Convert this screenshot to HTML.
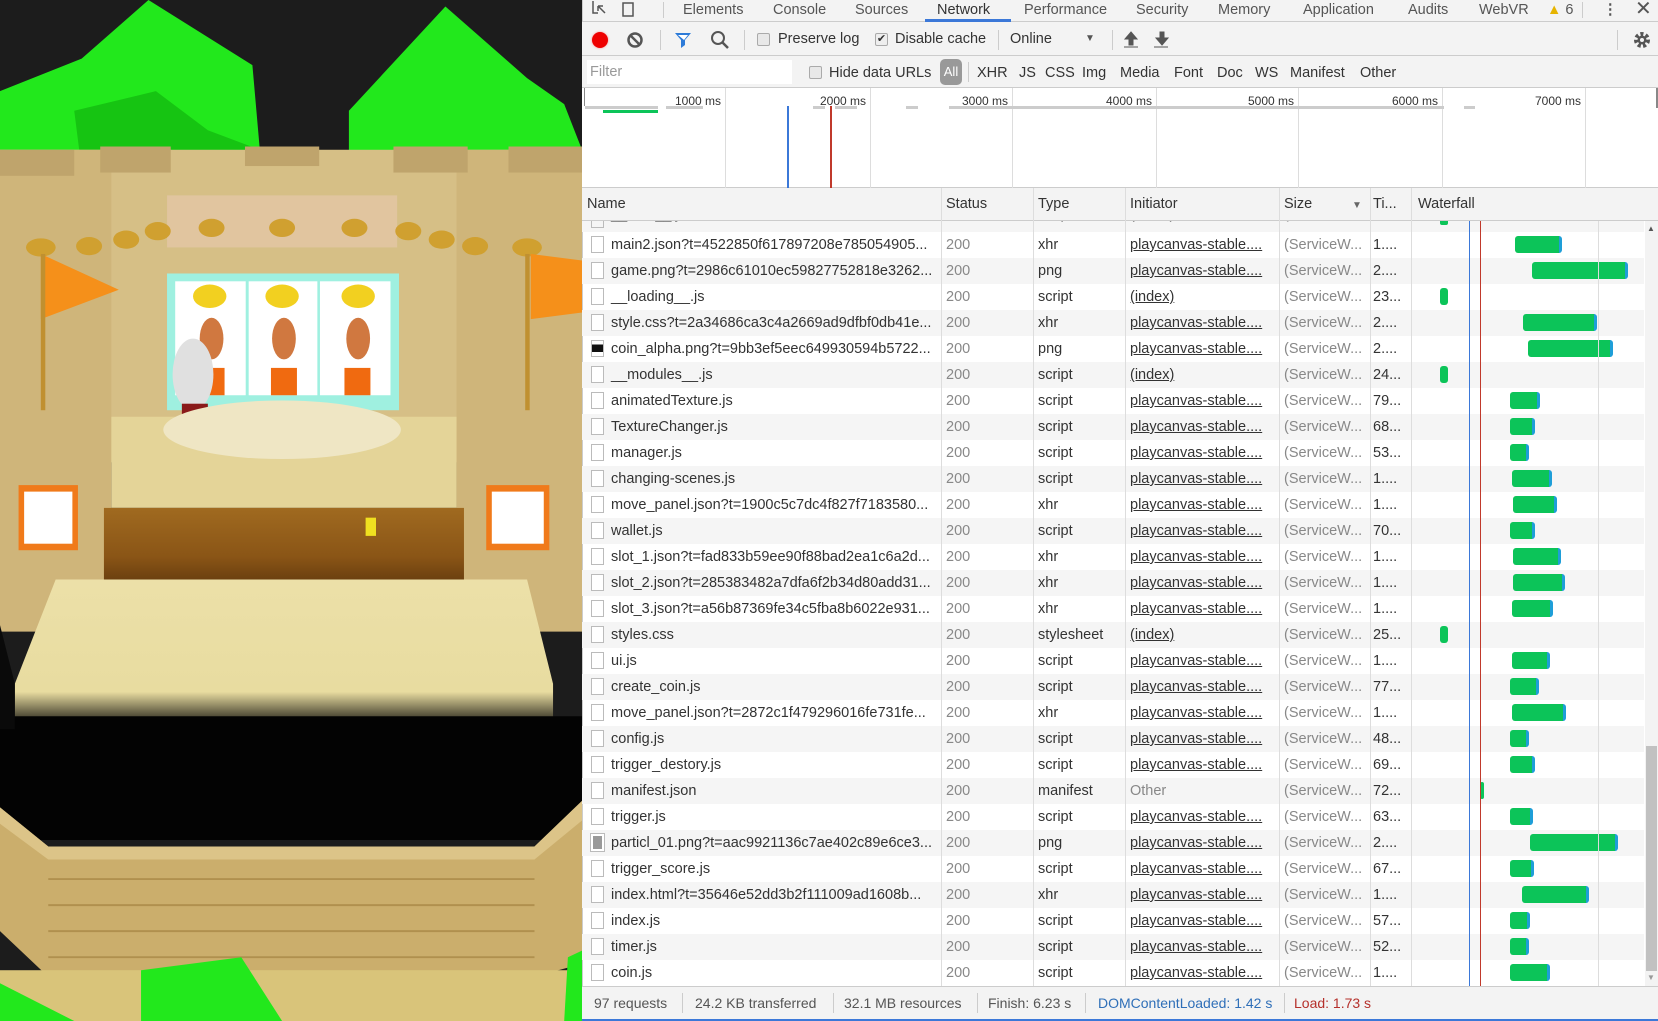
<!DOCTYPE html>
<html><head><meta charset="utf-8"><style>
*{margin:0;padding:0;box-sizing:border-box}
body{width:1658px;height:1021px;overflow:hidden;position:relative;background:#fff;font-family:"Liberation Sans",sans-serif;font-size:14.5px;color:#333}
.a{position:absolute;white-space:nowrap}
#dt{position:absolute;left:582px;top:0;width:1076px;height:1021px;background:#fff}
.tab{position:absolute;top:0;line-height:20px;color:#555;font-size:14.5px}
.sep{position:absolute;width:1px;background:#ccc}
.cb{position:absolute;width:13px;height:13px;border:1px solid #aaa;border-radius:2px;background:#e8e8e8}
.row{position:absolute;left:0;width:1062px;height:26px;line-height:26px}
.row.g{background:#f5f5f5}
.row span{position:absolute;top:0;white-space:nowrap}
.ic{position:absolute;left:9px;top:4px;width:13px;height:17px;border:1px solid #bbb;background:#fff}
.n{left:29px}.s{left:364px;color:#888}.t{left:456px}.i{left:548px;text-decoration:underline}.z{left:702px;color:#888}.m{left:791px}
.bar{position:absolute;top:4px;height:17px;background:#0cc459;border-radius:3px;border-right:3px solid #1e9ed8}
.vl{position:absolute;top:188px;height:798px;width:1px;background:#ddd}
.hd{position:absolute;top:196px;color:#333}
.ms{position:absolute;top:94px;font-size:12px;color:#333;text-align:right;width:60px}
.ov{position:absolute;top:106px;height:3px;background:#ccc}
.st{position:absolute;top:995px;color:#555;font-size:14px}
.flt{position:absolute;top:65px}
</style></head><body>
<svg class="a" style="left:0;top:0" width="582" height="1021" viewBox="0 0 1568 1568" preserveAspectRatio="none">
<rect width="1568" height="1568" fill="#1c1c1c"/>
<polygon points="0,140 220,90 400,0 680,100 700,230 0,250" fill="#22e81c"/>
<polygon points="200,170 420,140 560,200 700,230 220,260" fill="#16c412"/>
<polygon points="940,170 1200,10 1420,120 1520,160 1568,230 1568,260 940,250" fill="#22e81c"/>
<rect x="0" y="230" width="1568" height="480" fill="#d6bf86"/>
<rect x="0" y="230" width="300" height="740" fill="#cfb57a"/>
<rect x="1230" y="230" width="338" height="740" fill="#cfb57a"/>
<g fill="#bfa46c"><rect x="0" y="230" width="200" height="40"/><rect x="270" y="225" width="190" height="40"/><rect x="660" y="225" width="200" height="30"/><rect x="1060" y="225" width="200" height="40"/><rect x="1370" y="225" width="198" height="40"/></g>
<rect x="450" y="300" width="620" height="80" fill="#e8c9b0" opacity=".6"/>
<g fill="#d0a030"><ellipse cx="110" cy="380" rx="40" ry="14"/><ellipse cx="240" cy="378" rx="35" ry="14"/><ellipse cx="340" cy="368" rx="35" ry="14"/><ellipse cx="425" cy="355" rx="35" ry="14"/><ellipse cx="570" cy="350" rx="35" ry="14"/><ellipse cx="760" cy="350" rx="35" ry="14"/><ellipse cx="955" cy="350" rx="35" ry="14"/><ellipse cx="1100" cy="355" rx="35" ry="14"/><ellipse cx="1190" cy="368" rx="35" ry="14"/><ellipse cx="1280" cy="378" rx="35" ry="14"/><ellipse cx="1420" cy="380" rx="40" ry="14"/></g>
<rect x="450" y="420" width="625" height="210" fill="#9ff0e0"/>
<rect x="472" y="432" width="190" height="175" fill="#fff"/><rect x="670" y="432" width="185" height="175" fill="#fff"/><rect x="862" y="432" width="190" height="175" fill="#fff"/>
<g fill="#f2d020"><ellipse cx="565" cy="455" rx="45" ry="18"/><ellipse cx="760" cy="455" rx="45" ry="18"/><ellipse cx="965" cy="455" rx="45" ry="18"/></g>
<g fill="#d07840"><circle cx="570" cy="520" r="32"/><circle cx="765" cy="520" r="32"/><circle cx="965" cy="520" r="32"/></g>
<g fill="#f06a10"><rect x="730" y="565" width="70" height="42"/><rect x="928" y="565" width="70" height="42"/><rect x="540" y="565" width="65" height="42"/></g>
<circle cx="520" cy="575" r="55" fill="#e0e0e0"/><rect x="490" y="620" width="70" height="45" fill="#8a1a1a"/>
<polygon points="300,640 1230,640 1230,780 300,780" fill="#e4d498"/>
<ellipse cx="760" cy="660" rx="320" ry="45" fill="#efe6c4"/>
<polygon points="110,390 320,445 110,490" fill="#f5901a"/><rect x="110" y="390" width="12" height="240" fill="#c09030"/>
<polygon points="1430,390 1568,400 1568,480 1430,490" fill="#f5901a"/><rect x="1415" y="390" width="12" height="240" fill="#c09030"/>
<rect x="50" y="745" width="160" height="100" fill="#f07a1a"/><rect x="65" y="755" width="130" height="80" fill="#fff"/>
<rect x="1310" y="745" width="170" height="100" fill="#f07a1a"/><rect x="1325" y="755" width="140" height="80" fill="#fff"/>
<defs><linearGradient id="w" x1="0" y1="0" x2="0" y2="1"><stop offset="0" stop-color="#a06a20"/><stop offset=".5" stop-color="#8a5516"/><stop offset="1" stop-color="#4a2808"/></linearGradient>
<linearGradient id="f" x1="0" y1="0" x2="0" y2="1"><stop offset="0" stop-color="#ece0a8"/><stop offset=".75" stop-color="#e8dca0"/><stop offset="1" stop-color="#000"/></linearGradient></defs>
<rect x="280" y="780" width="970" height="150" fill="url(#w)"/>
<rect x="985" y="795" width="28" height="28" fill="#f0e020"/>
<polygon points="150,890 1420,890 1490,1050 1490,1120 40,1120 40,1050" fill="url(#f)"/>
<rect x="0" y="1100" width="1568" height="190" fill="#030303"/>
<polygon points="0,960 40,1050 40,1120 0,1120" fill="#0a0a0a"/>
<polygon points="0,1240 130,1300 1440,1300 1568,1230 1568,1480 1440,1500 130,1500 0,1430" fill="#cbae6c"/>
<polygon points="0,1240 130,1300 1440,1300 1568,1230 1568,1260 1440,1320 130,1320 0,1265" fill="#dcc488"/>
<g stroke="#b0904e" stroke-width="3"><line x1="130" y1="1350" x2="1440" y2="1350"/><line x1="130" y1="1390" x2="1440" y2="1390"/><line x1="130" y1="1430" x2="1440" y2="1430"/><line x1="130" y1="1470" x2="1440" y2="1470"/></g>
<rect x="0" y="1490" width="1568" height="78" fill="#d9c47a"/>
<polygon points="380,1490 650,1470 760,1568 380,1568" fill="#22e81c"/>
<polygon points="0,1510 200,1568 0,1568" fill="#22e81c"/>
<polygon points="1530,1470 1568,1460 1568,1568 1520,1568" fill="#22e81c"/>
</svg>
<div id="dt">
<div class="a" style="left:0;top:0;width:1076px;height:22px;background:#f3f3f3;border-bottom:1px solid #ccc"></div>
<div class="a" style="left:0;top:0;width:1px;height:1021px;background:#ccc"></div>
<svg class="a" style="left:8px;top:0" width="50" height="18"><path d="M3 1v12h5M8 6l7 7M8 6h5M8 6v5" stroke="#555" stroke-width="1.5" fill="none"/><rect x="33" y="3" width="10" height="13" stroke="#555" stroke-width="1.5" fill="none"/></svg>
<div class="sep" style="left:81px;top:2px;height:16px"></div>
<div class="tab" style="left:101px">Elements</div>
<div class="tab" style="left:191px">Console</div>
<div class="tab" style="left:273px">Sources</div>
<div class="tab" style="left:355px;color:#333">Network</div>
<div class="a" style="left:343px;top:19px;width:86px;height:3px;background:#3b78d8"></div>
<div class="tab" style="left:442px">Performance</div>
<div class="tab" style="left:554px">Security</div>
<div class="tab" style="left:636px">Memory</div>
<div class="tab" style="left:721px">Application</div>
<div class="tab" style="left:826px">Audits</div>
<div class="tab" style="left:897px">WebVR</div>
<div class="tab" style="left:965px;color:#555"><span style="color:#e6b400">▲</span> 6</div>
<div class="sep" style="left:1000px;top:2px;height:16px"></div>
<div class="tab" style="left:1021px;font-weight:bold">⋮</div>
<div class="tab" style="left:1053px;font-size:20px;line-height:18px;color:#555">✕</div>
<div class="a" style="left:0;top:22px;width:1076px;height:34px;background:#f3f3f3;border-bottom:1px solid #ccc"></div>
<div class="a" style="left:10px;top:32px;width:16px;height:16px;border-radius:50%;background:#e00;box-shadow:0 0 2px #f88"></div>
<svg class="a" style="left:44px;top:31px" width="18" height="18"><circle cx="9" cy="9" r="6.5" stroke="#555" stroke-width="2.5" fill="none"/><line x1="4.5" y1="4.5" x2="13.5" y2="13.5" stroke="#555" stroke-width="2.5"/></svg>
<div class="sep" style="left:78px;top:30px;height:20px"></div>
<svg class="a" style="left:92px;top:31px" width="18" height="18"><path d="M1 2h16l-6 7v5l-4 3v-8z" fill="#2d7bd8"/><path d="M4 4h10l-4 5z" fill="#fff"/></svg>
<svg class="a" style="left:128px;top:30px" width="20" height="20"><circle cx="8" cy="8" r="6" stroke="#555" stroke-width="2" fill="none"/><line x1="12" y1="12" x2="18" y2="18" stroke="#555" stroke-width="2.5"/></svg>
<div class="sep" style="left:162px;top:30px;height:20px"></div>
<div class="cb" style="left:175px;top:33px"></div><div class="a" style="left:196px;top:31px">Preserve log</div>
<div class="cb" style="left:293px;top:33px;background:#eee;font-size:11px;line-height:11px;text-align:center">✔</div><div class="a" style="left:313px;top:31px">Disable cache</div>
<div class="sep" style="left:416px;top:30px;height:20px"></div>
<div class="a" style="left:428px;top:31px">Online</div>
<div class="a" style="left:503px;top:33px;font-size:10px;color:#555">▼</div>
<div class="sep" style="left:530px;top:30px;height:20px"></div>
<svg class="a" style="left:541px;top:30px" width="70" height="20"><path d="M8 2l6 7h-4v6h-4v-6h-4z M1 17h14" fill="#555" stroke="#555" stroke-width="1"/><path d="M39 15l6-7h-4v-6h-4v6h-4z M31 17h14" fill="#555" stroke="#555" stroke-width="1"/></svg>
<div class="sep" style="left:1035px;top:30px;height:20px"></div>
<svg class="a" style="left:1050px;top:30px" width="20" height="20"><circle cx="10" cy="10" r="6" fill="none" stroke="#555" stroke-width="4" stroke-dasharray="3 2.3"/><circle cx="10" cy="10" r="4.5" fill="#555"/><circle cx="10" cy="10" r="2" fill="#f3f3f3"/></svg>
<div class="a" style="left:0;top:56px;width:1076px;height:32px;background:#f3f3f3;border-bottom:1px solid #ccc"></div>
<div class="a" style="left:5px;top:59px;width:205px;height:24px;background:#fff;color:#999;line-height:24px;padding-left:3px;top:60px">Filter</div>
<div class="cb" style="left:227px;top:66px"></div><div class="flt" style="left:247px">Hide data URLs</div>
<div class="a" style="left:358px;top:59px;width:22px;height:26px;background:#999;border-radius:5px;color:#fff;text-align:center;line-height:26px;font-size:13px">All</div>
<div class="sep" style="left:386px;top:62px;height:20px"></div>
<div class="flt" style="left:395px">XHR</div>
<div class="flt" style="left:437px">JS</div>
<div class="flt" style="left:463px">CSS</div>
<div class="flt" style="left:500px">Img</div>
<div class="flt" style="left:538px">Media</div>
<div class="flt" style="left:592px">Font</div>
<div class="flt" style="left:635px">Doc</div>
<div class="flt" style="left:673px">WS</div>
<div class="flt" style="left:708px">Manifest</div>
<div class="flt" style="left:778px">Other</div>
<div class="a" style="left:0;top:88px;width:1076px;height:100px;background:#fff;border-bottom:1px solid #ccc"></div>
<div class="a" style="left:2px;top:88px;width:1px;height:18px;background:#888"></div>
<div class="vl" style="left:143px;top:88px;height:100px"></div>
<div class="vl" style="left:288px;top:88px;height:100px"></div>
<div class="vl" style="left:430px;top:88px;height:100px"></div>
<div class="vl" style="left:574px;top:88px;height:100px"></div>
<div class="vl" style="left:716px;top:88px;height:100px"></div>
<div class="vl" style="left:860px;top:88px;height:100px"></div>
<div class="vl" style="left:1003px;top:88px;height:100px"></div>
<div class="a" style="left:1074px;top:88px;width:2px;height:20px;background:#888"></div>
<div class="ms" style="left:79px">1000 ms</div>
<div class="ms" style="left:224px">2000 ms</div>
<div class="ms" style="left:366px">3000 ms</div>
<div class="ms" style="left:510px">4000 ms</div>
<div class="ms" style="left:652px">5000 ms</div>
<div class="ms" style="left:796px">6000 ms</div>
<div class="ms" style="left:939px">7000 ms</div>
<div class="ov" style="left:3px;width:73px"></div>
<div class="a" style="left:21px;top:110px;width:55px;height:3px;background:#0cc459"></div>
<div class="ov" style="left:84px;width:37px"></div>
<div class="ov" style="left:231px;width:12px"></div>
<div class="ov" style="left:253px;width:22px"></div>
<div class="ov" style="left:324px;width:12px"></div>
<div class="ov" style="left:367px;width:495px"></div>
<div class="ov" style="left:882px;width:11px"></div>
<div class="a" style="left:205px;top:106px;width:2px;height:82px;background:#3b78d8"></div>
<div class="a" style="left:248px;top:106px;width:2px;height:82px;background:#c0392b"></div>
<div class="a" style="left:0;top:188px;width:1076px;height:33px;background:#f3f3f3;border-bottom:1px solid #ccc"></div>
<div class="hd" style="left:5px">Name</div>
<div class="hd" style="left:364px">Status</div>
<div class="hd" style="left:456px">Type</div>
<div class="hd" style="left:548px">Initiator</div>
<div class="hd" style="left:702px">Size</div>
<div class="hd" style="left:770px;font-size:10px;top:200px;color:#666">▼</div>
<div class="hd" style="left:791px">Ti...</div>
<div class="hd" style="left:836px">Waterfall</div>
<div class="a" style="left:0;top:221px;width:1062px;height:11px;background:#f5f5f5;overflow:hidden"><div class="a" style="left:9px;top:-10px;width:13px;height:17px;border:1px solid #bbb"></div><div class="a" style="left:29px;top:-14px;color:#888">__start__.js</div><div class="a" style="left:364px;top:-14px;color:#aaa">200</div><div class="a" style="left:456px;top:-14px;color:#888">script</div><div class="a" style="left:548px;top:-14px;color:#888;text-decoration:underline">(index)</div><div class="a" style="left:702px;top:-14px;color:#aaa">(ServiceW...</div><div class="a" style="left:791px;top:-14px;color:#aaa">23...</div><div class="a" style="left:858px;top:-6px;width:8px;height:10px;background:#0cc459;border-radius:2px"></div></div>

<div class="row" style="top:232px"><div class="ic"></div><span class="n">main2.json?t=4522850f617897208e785054905...</span><span class="s">200</span><span class="t">xhr</span><span class="i">playcanvas-stable....</span><span class="z">(ServiceW...</span><span class="m">1....</span><div class="bar" style="left:933px;width:47px"></div></div>
<div class="row g" style="top:258px"><div class="ic"></div><span class="n">game.png?t=2986c61010ec59827752818e3262...</span><span class="s">200</span><span class="t">png</span><span class="i">playcanvas-stable....</span><span class="z">(ServiceW...</span><span class="m">2....</span><div class="bar" style="left:950px;width:96px"></div></div>
<div class="row" style="top:284px"><div class="ic"></div><span class="n">__loading__.js</span><span class="s">200</span><span class="t">script</span><span class="i">(index)</span><span class="z">(ServiceW...</span><span class="m">23...</span><div class="bar" style="left:858px;width:8px;border-right:0"></div></div>
<div class="row g" style="top:310px"><div class="ic"></div><span class="n">style.css?t=2a34686ca3c4a2669ad9dfbf0db41e...</span><span class="s">200</span><span class="t">xhr</span><span class="i">playcanvas-stable....</span><span class="z">(ServiceW...</span><span class="m">2....</span><div class="bar" style="left:941px;width:74px"></div></div>
<div class="row" style="top:336px"><div class="ic" style="background:linear-gradient(#fff 25%,#111 25%,#111 75%,#fff 75%)"></div><span class="n">coin_alpha.png?t=9bb3ef5eec649930594b5722...</span><span class="s">200</span><span class="t">png</span><span class="i">playcanvas-stable....</span><span class="z">(ServiceW...</span><span class="m">2....</span><div class="bar" style="left:946px;width:85px"></div></div>
<div class="row g" style="top:362px"><div class="ic"></div><span class="n">__modules__.js</span><span class="s">200</span><span class="t">script</span><span class="i">(index)</span><span class="z">(ServiceW...</span><span class="m">24...</span><div class="bar" style="left:858px;width:8px;border-right:0"></div></div>
<div class="row" style="top:388px"><div class="ic"></div><span class="n">animatedTexture.js</span><span class="s">200</span><span class="t">script</span><span class="i">playcanvas-stable....</span><span class="z">(ServiceW...</span><span class="m">79...</span><div class="bar" style="left:928px;width:30px"></div></div>
<div class="row g" style="top:414px"><div class="ic"></div><span class="n">TextureChanger.js</span><span class="s">200</span><span class="t">script</span><span class="i">playcanvas-stable....</span><span class="z">(ServiceW...</span><span class="m">68...</span><div class="bar" style="left:928px;width:25px"></div></div>
<div class="row" style="top:440px"><div class="ic"></div><span class="n">manager.js</span><span class="s">200</span><span class="t">script</span><span class="i">playcanvas-stable....</span><span class="z">(ServiceW...</span><span class="m">53...</span><div class="bar" style="left:928px;width:19px"></div></div>
<div class="row g" style="top:466px"><div class="ic"></div><span class="n">changing-scenes.js</span><span class="s">200</span><span class="t">script</span><span class="i">playcanvas-stable....</span><span class="z">(ServiceW...</span><span class="m">1....</span><div class="bar" style="left:930px;width:40px"></div></div>
<div class="row" style="top:492px"><div class="ic"></div><span class="n">move_panel.json?t=1900c5c7dc4f827f7183580...</span><span class="s">200</span><span class="t">xhr</span><span class="i">playcanvas-stable....</span><span class="z">(ServiceW...</span><span class="m">1....</span><div class="bar" style="left:931px;width:44px"></div></div>
<div class="row g" style="top:518px"><div class="ic"></div><span class="n">wallet.js</span><span class="s">200</span><span class="t">script</span><span class="i">playcanvas-stable....</span><span class="z">(ServiceW...</span><span class="m">70...</span><div class="bar" style="left:928px;width:25px"></div></div>
<div class="row" style="top:544px"><div class="ic"></div><span class="n">slot_1.json?t=fad833b59ee90f88bad2ea1c6a2d...</span><span class="s">200</span><span class="t">xhr</span><span class="i">playcanvas-stable....</span><span class="z">(ServiceW...</span><span class="m">1....</span><div class="bar" style="left:931px;width:48px"></div></div>
<div class="row g" style="top:570px"><div class="ic"></div><span class="n">slot_2.json?t=285383482a7dfa6f2b34d80add31...</span><span class="s">200</span><span class="t">xhr</span><span class="i">playcanvas-stable....</span><span class="z">(ServiceW...</span><span class="m">1....</span><div class="bar" style="left:931px;width:52px"></div></div>
<div class="row" style="top:596px"><div class="ic"></div><span class="n">slot_3.json?t=a56b87369fe34c5fba8b6022e931...</span><span class="s">200</span><span class="t">xhr</span><span class="i">playcanvas-stable....</span><span class="z">(ServiceW...</span><span class="m">1....</span><div class="bar" style="left:930px;width:41px"></div></div>
<div class="row g" style="top:622px"><div class="ic"></div><span class="n">styles.css</span><span class="s">200</span><span class="t">stylesheet</span><span class="i">(index)</span><span class="z">(ServiceW...</span><span class="m">25...</span><div class="bar" style="left:858px;width:8px;border-right:0"></div></div>
<div class="row" style="top:648px"><div class="ic"></div><span class="n">ui.js</span><span class="s">200</span><span class="t">script</span><span class="i">playcanvas-stable....</span><span class="z">(ServiceW...</span><span class="m">1....</span><div class="bar" style="left:930px;width:38px"></div></div>
<div class="row g" style="top:674px"><div class="ic"></div><span class="n">create_coin.js</span><span class="s">200</span><span class="t">script</span><span class="i">playcanvas-stable....</span><span class="z">(ServiceW...</span><span class="m">77...</span><div class="bar" style="left:928px;width:29px"></div></div>
<div class="row" style="top:700px"><div class="ic"></div><span class="n">move_panel.json?t=2872c1f479296016fe731fe...</span><span class="s">200</span><span class="t">xhr</span><span class="i">playcanvas-stable....</span><span class="z">(ServiceW...</span><span class="m">1....</span><div class="bar" style="left:930px;width:54px"></div></div>
<div class="row g" style="top:726px"><div class="ic"></div><span class="n">config.js</span><span class="s">200</span><span class="t">script</span><span class="i">playcanvas-stable....</span><span class="z">(ServiceW...</span><span class="m">48...</span><div class="bar" style="left:928px;width:19px"></div></div>
<div class="row" style="top:752px"><div class="ic"></div><span class="n">trigger_destory.js</span><span class="s">200</span><span class="t">script</span><span class="i">playcanvas-stable....</span><span class="z">(ServiceW...</span><span class="m">69...</span><div class="bar" style="left:928px;width:25px"></div></div>
<div class="row g" style="top:778px"><div class="ic"></div><span class="n">manifest.json</span><span class="s">200</span><span class="t">manifest</span><span class="i" style="text-decoration:none;color:#888">Other</span><span class="z">(ServiceW...</span><span class="m">72...</span><div class="bar" style="left:898px;width:4px;border-right:0"></div></div>
<div class="row" style="top:804px"><div class="ic"></div><span class="n">trigger.js</span><span class="s">200</span><span class="t">script</span><span class="i">playcanvas-stable....</span><span class="z">(ServiceW...</span><span class="m">63...</span><div class="bar" style="left:928px;width:23px"></div></div>
<div class="row g" style="top:830px"><div class="ic" style="background:#999;border:2px solid #fff;outline:1px solid #bbb"></div><span class="n">particl_01.png?t=aac9921136c7ae402c89e6ce3...</span><span class="s">200</span><span class="t">png</span><span class="i">playcanvas-stable....</span><span class="z">(ServiceW...</span><span class="m">2....</span><div class="bar" style="left:948px;width:88px"></div></div>
<div class="row" style="top:856px"><div class="ic"></div><span class="n">trigger_score.js</span><span class="s">200</span><span class="t">script</span><span class="i">playcanvas-stable....</span><span class="z">(ServiceW...</span><span class="m">67...</span><div class="bar" style="left:928px;width:24px"></div></div>
<div class="row g" style="top:882px"><div class="ic"></div><span class="n">index.html?t=35646e52dd3b2f111009ad1608b...</span><span class="s">200</span><span class="t">xhr</span><span class="i">playcanvas-stable....</span><span class="z">(ServiceW...</span><span class="m">1....</span><div class="bar" style="left:940px;width:67px"></div></div>
<div class="row" style="top:908px"><div class="ic"></div><span class="n">index.js</span><span class="s">200</span><span class="t">script</span><span class="i">playcanvas-stable....</span><span class="z">(ServiceW...</span><span class="m">57...</span><div class="bar" style="left:928px;width:20px"></div></div>
<div class="row g" style="top:934px"><div class="ic"></div><span class="n">timer.js</span><span class="s">200</span><span class="t">script</span><span class="i">playcanvas-stable....</span><span class="z">(ServiceW...</span><span class="m">52...</span><div class="bar" style="left:928px;width:19px"></div></div>
<div class="row" style="top:960px"><div class="ic"></div><span class="n">coin.js</span><span class="s">200</span><span class="t">script</span><span class="i">playcanvas-stable....</span><span class="z">(ServiceW...</span><span class="m">1....</span><div class="bar" style="left:928px;width:40px"></div></div>

<div class="vl" style="left:359px"></div>
<div class="vl" style="left:451px"></div>
<div class="vl" style="left:543px"></div>
<div class="vl" style="left:697px"></div>
<div class="vl" style="left:788px"></div>
<div class="vl" style="left:829px"></div>
<div class="vl" style="left:1016px;top:221px;height:765px"></div>
<div class="a" style="left:887px;top:221px;width:1px;height:765px;background:#3b78d8"></div>
<div class="a" style="left:898px;top:221px;width:1px;height:765px;background:#c0392b"></div>
<div class="a" style="left:1063px;top:221px;width:13px;height:765px;background:#f3f3f3"></div>
<div class="a" style="left:1064px;top:746px;width:11px;height:225px;background:#c1c1c1"></div>
<div class="a" style="left:1065px;top:224px;font-size:8px;color:#555">▲</div>
<div class="a" style="left:1065px;top:973px;font-size:8px;color:#999">▼</div>
<div class="a" style="left:0;top:986px;width:1076px;height:33px;background:#f3f3f3;border-top:1px solid #ccc"></div>
<div class="a" style="left:0;top:1019px;width:1076px;height:2px;background:#3b78d8"></div>
<div class="st" style="left:12px">97 requests</div>
<div class="sep" style="left:100px;top:993px;height:20px"></div>
<div class="st" style="left:113px">24.2 KB transferred</div>
<div class="sep" style="left:251px;top:993px;height:20px"></div>
<div class="st" style="left:262px">32.1 MB resources</div>
<div class="sep" style="left:395px;top:993px;height:20px"></div>
<div class="st" style="left:406px">Finish: 6.23 s</div>
<div class="sep" style="left:503px;top:993px;height:20px"></div>
<div class="st" style="left:516px;color:#2f6fb8">DOMContentLoaded: 1.42 s</div>
<div class="sep" style="left:702px;top:993px;height:20px"></div>
<div class="st" style="left:712px;color:#b5302b">Load: 1.73 s</div>
</div>
</body></html>
